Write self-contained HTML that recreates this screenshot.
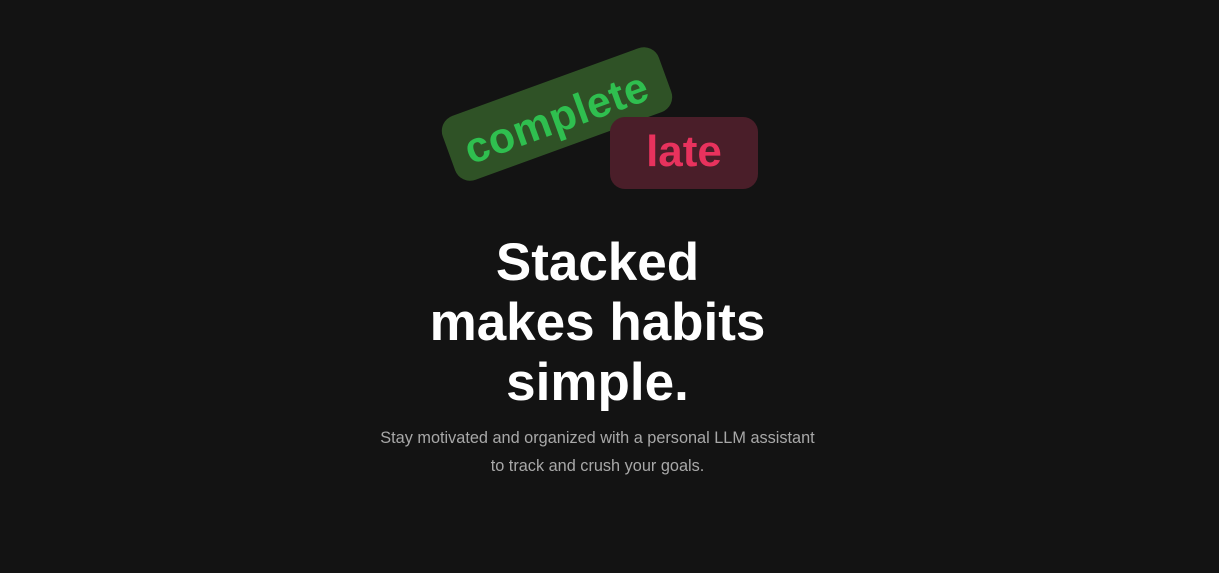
<!DOCTYPE html>
<html><head><meta charset="utf-8"><style>
html,body{margin:0;padding:0;background:#131313;width:1219px;height:573px;overflow:hidden;font-family:"Liberation Sans",sans-serif}
.g{position:absolute;left:442px;top:80px;width:230px;height:68px;background:#2f5226;border-radius:16px;transform:rotate(-20deg);transform-origin:center;color:#2fbf4f;font-size:43px;font-weight:bold;line-height:72px;text-align:center;letter-spacing:0.5px}
.g span{display:inline-block;transform:translate(-2px,2px)}
.l{position:absolute;left:610px;top:117px;width:148px;height:72px;background:#4a1e29;border-radius:15px;color:#e8325d;font-size:44px;font-weight:bold;line-height:70px;text-align:center}
h1{position:absolute;left:0;width:1195px;top:233px;margin:0;text-align:center;color:#fff;font-size:53px;line-height:60px;font-weight:bold;letter-spacing:0}
p{position:absolute;left:0;width:1195px;top:424px;margin:0;text-align:center;color:#a8a8a8;font-size:16.3px;line-height:28px}
</style></head><body>
<div class="g"><span>complete</span></div>
<div class="l">late</div>
<h1>Stacked<br>makes habits<br>simple.</h1>
<p>Stay motivated and organized with a personal LLM assistant<br>to track and crush your goals.</p>
</body></html>
